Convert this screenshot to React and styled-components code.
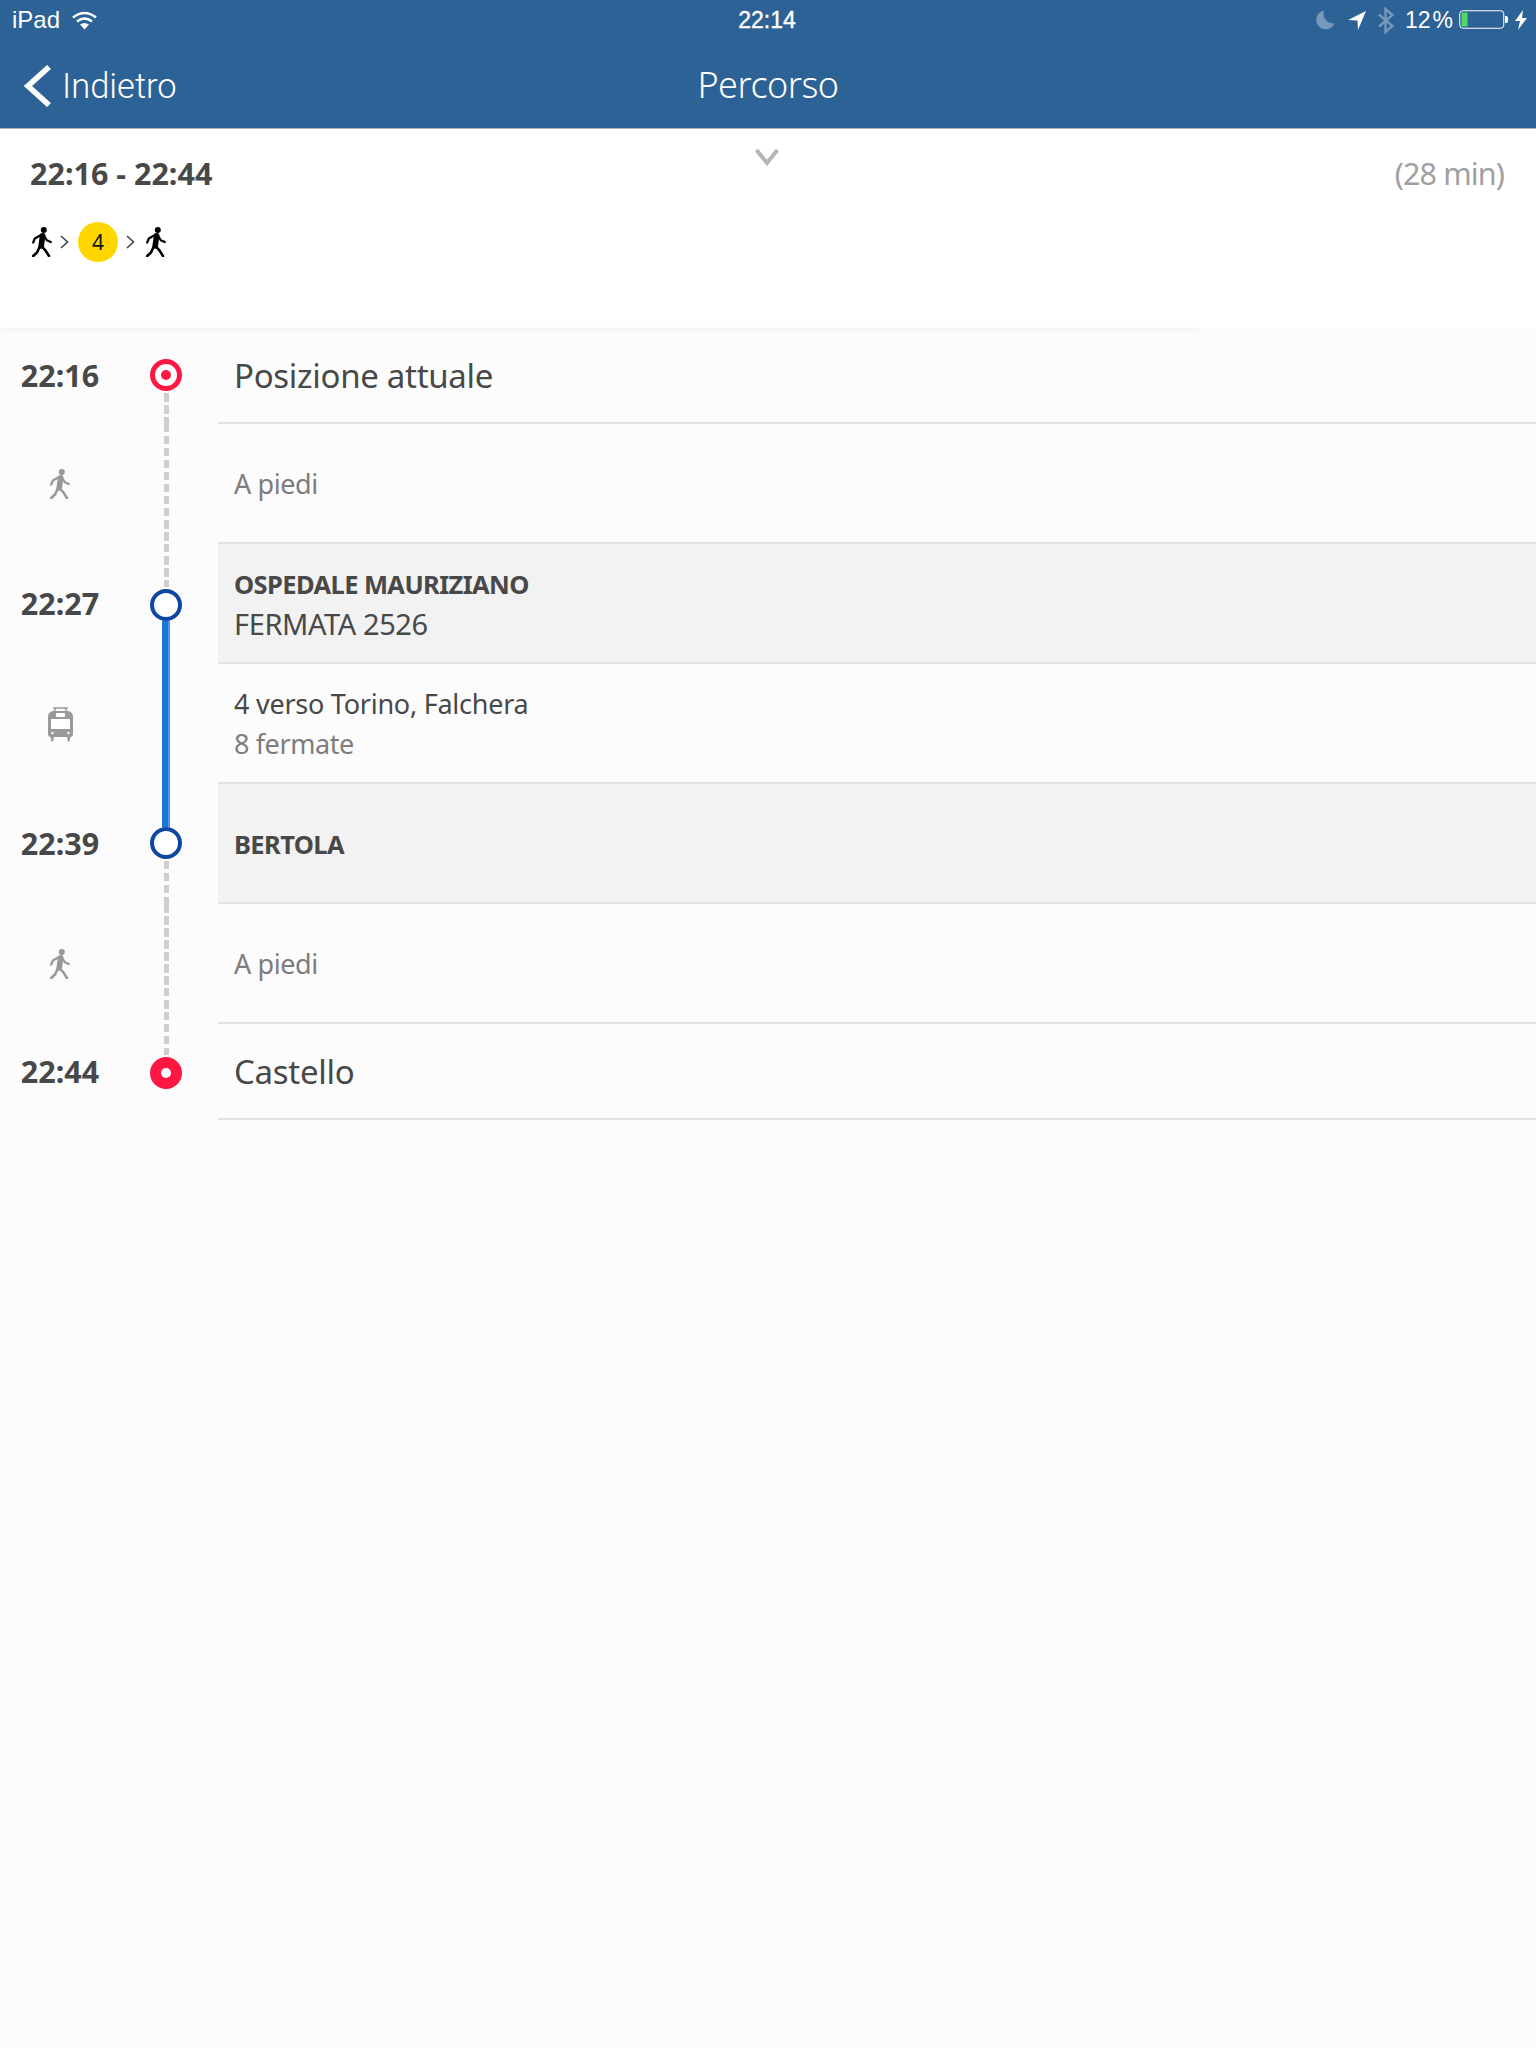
import React from "react";
import styled, { createGlobalStyle } from "styled-components";

const Global = createGlobalStyle`
  html, body { margin: 0; padding: 0; background: #fbfbfb; }
  body { font-family: "Noto Sans", "Liberation Sans", sans-serif; color: #484848; }
  * { box-sizing: border-box; }
`;
const Page = styled.div`width: 1536px; height: 2048px; background: #fbfbfb; overflow: hidden;`;
const Header = styled.header`height: 129px; background: #2d6296; border-bottom: 1px solid #a9b4bf; display: flex; flex-direction: column; color: #fff;`;
const StatusBar = styled.div`height: 40px; display: grid; grid-template-columns: 1fr auto 1fr; align-items: center; padding: 0 9px 0 12px; font: 24px "Liberation Sans", sans-serif;`;
const StatusLeft = styled.div`display: flex; align-items: center; gap: 12px;`;
const StatusClock = styled.div`font-size: 23px; -webkit-text-stroke: 0.4px #fff; margin-right: 5px;`;
const StatusRight = styled.div`display: flex; align-items: center; justify-content: flex-end;`;
const Percent = styled.span`margin: 0 6px 0 11px; font-size: 23px;`;
const NavBar = styled.div`flex: 1; display: grid; grid-template-columns: 1fr auto 1fr; align-items: center; padding: 3px 24px 0;`;
const BackLink = styled.div`display: flex; align-items: center; gap: 11px; font: 300 34.5px Roboto, "Liberation Sans", sans-serif;`;
const Title = styled.div`font-family: "Noto Sans", sans-serif; font-size: 36px; font-weight: 300; letter-spacing: -0.5px; margin-bottom: 3px;`;

const Summary = styled.section`position: relative; height: 199px; background: #fff; padding: 24px 32px 0 30px;
  &::after { content: ""; position: absolute; left: 0; bottom: 0; width: 1200px; height: 2px; box-shadow: 0 2px 5px rgba(0,0,0,.09); }`;
const SummaryTop = styled.div`display: grid; grid-template-columns: 1fr auto 1fr; align-items: start;`;
const Range = styled.div`font-size: 30.5px; font-weight: 700; line-height: 40px; color: #484848;`;
const Toggle = styled.div`height: 18px; display: flex; justify-content: center; margin-top: -5px;`;
const Duration = styled.div`font-size: 30.5px; line-height: 40px; color: #a0a0a0; text-align: right; font-weight: 400; letter-spacing: -0.9px;`;
const Legs = styled.div`display: flex; align-items: center; margin-top: 29px; padding-left: 2px; height: 40px;`;
const Badge = styled.span`width: 40px; height: 40px; border-radius: 50%; background: #ffd600; color: #111; display: flex; align-items: center; justify-content: center; font-size: 21px; margin-left: 9px;`;
const Arrow = styled.svg`margin-left: 8px; display: block;`;
const LegGap = styled.span`width: 11px;`;

const Timeline = styled.main`background: #fcfcfc;`;
const Row = styled.div`display: grid; grid-template-columns: 120px 92px 1fr; height: ${p => p.$h}px;`;
const TimeCell = styled.div`display: flex; align-items: center; justify-content: center; padding-bottom: 2px; font-size: 30.5px; font-weight: 700; color: #484848;`;
const Rail = styled.div`display: flex; flex-direction: column; align-items: center;`;
const Segment = styled.div`flex: 1;
  ${p => p.$kind === "walk" && `width: 5px; background: repeating-linear-gradient(to bottom, #cfcfcf 0 8.5px, transparent 8.5px 12px);`}
  ${p => p.$kind === "line" && `width: 8px; background: linear-gradient(to right, #1976d2 0 6px, #4c97e6 6px 8px);`}
  ${p => p.$kind === "none" && `visibility: hidden;`}
  margin: ${p => (p.$kind === "walk" ? (p.$gap === "top" ? "2px 0 0" : p.$gap === "bottom" ? "0 0 2px" : "0") : "0")};`;
const Node = styled.div`width: 32px; height: 32px; border-radius: 50%; flex: none; display: flex; align-items: center; justify-content: center;
  ${p => p.$type === "start" && `border: 5px solid #ff1744; background: #fff;`}
  ${p => p.$type === "stop" && `border: 4.5px solid #0d47a1; background: #fff;`}
  ${p => p.$type === "end" && `background: #ff1744;`}
`;
const NodeDot = styled.span`width: 10px; height: 10px; border-radius: 50%; background: ${p => p.$c};`;
const Content = styled.div`margin-left: 6px; padding: 2px 0 0 16px; display: flex; flex-direction: column; justify-content: center; border-bottom: 2px solid #e2e2e2; background: ${p => (p.$stop ? "#f2f2f2" : "transparent")};`;
const Place = styled.div`font-size: 33px; line-height: 42px; letter-spacing: -0.3px; color: #484848;`;
const Muted = styled.div`font-size: 27px; line-height: 40px; letter-spacing: -0.4px; color: #7d7d7d;`;
const Line = styled.div`font-size: 27px; line-height: 40px; letter-spacing: -0.25px; color: #484848;`;
const Platform = styled.div`font-size: 29px; line-height: 40px; letter-spacing: -0.4px; color: #484848;`;
const StopName = styled.div`font-size: 25.5px; font-weight: 700; line-height: 40px; letter-spacing: -0.6px; color: #484848;`;
const IconCell = styled.div`display: flex; align-items: center; justify-content: center;`;

const Walker = ({ color }) => (
  <svg width="20" height="30" viewBox="0 0 20 30" fill="none" stroke={color} strokeLinecap="round" strokeLinejoin="round" style={{ display: "block" }}>
    <circle cx="11.8" cy="3" r="3" fill={color} stroke="none" />
    <path d="M10.6 8.8 L9.2 19" strokeWidth="5.6" />
    <path d="M9 8 L2.8 11.5 L1.2 15.5" strokeWidth="2.2" />
    <path d="M12 8.5 L14.8 13.2 L18.8 15" strokeWidth="2.2" />
    <path d="M7.8 19.5 L5 25.5 L1.2 29" strokeWidth="2.6" />
    <path d="M10 19.5 L13.6 23.6 L17 29" strokeWidth="2.6" />
  </svg>
);
const Tram = () => (
  <svg width="25" height="35" viewBox="0 0 25 35" style={{ display: "block" }}>
    <path d="M5 1 H20 M8 1 L6 5 M17 1 L19 5" stroke="#999" strokeWidth="1.3" fill="none" />
    <path d="M5 4 H20 Q25 5 25 10 V27 Q25 30 22 30 H3 Q0 30 0 27 V10 Q0 5 5 4 Z" fill="#999" />
    <rect x="8" y="6" width="9" height="4" rx="1" fill="#fff" />
    <rect x="3" y="12" width="19" height="10" fill="#fff" />
    <circle cx="4.5" cy="26" r="1.2" fill="#fff" />
    <circle cx="20.5" cy="26" r="1.2" fill="#fff" />
    <path d="M2.5 30 H6 L5 34.5 H3.5 Z M19 30 H22.5 L21.5 34.5 H20 Z" fill="#999" />
  </svg>
);
const LegArrow = () => (
  <Arrow width="9" height="14" viewBox="0 0 9 14"><path d="M1 1 L7.5 7 L1 13" fill="none" stroke="#444" strokeWidth="1.6" /></Arrow>
);

const Wifi = () => (
  <svg width="25" height="19" viewBox="0 0 25 19" fill="none" stroke="#fff" strokeWidth="2.6">
    <path d="M1 6.5 Q12.5 -2.5 24 6.5" /><path d="M5 10.5 Q12.5 4.5 20 10.5" /><path d="M12.5 18.5 L8 13.5 Q12.5 10.5 17 13.5 Z" fill="#fff" stroke="none" />
  </svg>
);
const Moon = () => (
  <svg width="19" height="20" viewBox="0 0 19 20" style={{ marginRight: 13 }}><path d="M8 0.5 A9.5 9.5 0 1 0 18.5 13.5 A10 10 0 0 1 8 0.5 Z" fill="#fff" opacity=".35" /></svg>
);
const Locate = () => (
  <svg width="18" height="19" viewBox="0 0 18 19" style={{ marginRight: 12 }}><path d="M0 9 L18 0 L10 19 L9.5 9.5 Z" fill="#fff" /></svg>
);
const Bluetooth = () => (
  <svg width="16" height="27" viewBox="0 0 16 27" fill="none" stroke="#fff" strokeOpacity=".35" strokeWidth="2.4"><path d="M1 7.5 L14.5 19 L7.5 25 V2 L14.5 8 L1 19.5" /></svg>
);
const Battery = () => (
  <svg width="50" height="20" viewBox="0 0 50 20" style={{ marginRight: 6 }}>
    <rect x=".75" y=".75" width="44" height="17.5" rx="3" fill="none" stroke="#fff" strokeWidth="1" />
    <rect x="2.5" y="2.5" width="6" height="14" fill="#4cd964" />
    <path d="M46 6 H47.5 Q49 6 49 8 V11 Q49 13 47.5 13 H46 Z" fill="#fff" />
  </svg>
);
const Bolt = () => (
  <svg width="12" height="20" viewBox="0 0 12 20"><path d="M8 0 L0 11 H5 L3 20 L12 8 H7 Z" fill="#fff" /></svg>
);

const Stage = ({ kind, gap }) => <Segment $kind={kind} $gap={gap} />;

export default function App() {
  return (
    <Page>
      <Global />
      <Header>
        <StatusBar>
          <StatusLeft>iPad <Wifi /></StatusLeft>
          <StatusClock>22:14</StatusClock>
          <StatusRight><Moon /><Locate /><Bluetooth /><Percent>12{"\u200A"}%</Percent><Battery /><Bolt /></StatusRight>
        </StatusBar>
        <NavBar>
          <BackLink>
            <svg width="27" height="42" viewBox="0 0 27 42" fill="none" stroke="#fff" strokeWidth="5.6"><path d="M25 2 L4 21 L25 40" /></svg>
            Indietro
          </BackLink>
          <Title>Percorso</Title>
          <div />
        </NavBar>
      </Header>
      <Summary>
        <SummaryTop>
          <Range>22:16 - 22:44</Range>
          <Toggle>
            <svg width="24" height="18" viewBox="0 0 24 18" fill="none" stroke="#b5b5b5" strokeWidth="4"><path d="M1.5 2 L12 15 L22.5 2" /></svg>
          </Toggle>
          <Duration>(28 min)</Duration>
        </SummaryTop>
        <Legs>
          <Walker color="#000" />
          <LegArrow />
          <Badge>4</Badge>
          <LegArrow />
          <LegGap />
          <Walker color="#000" />
        </Legs>
      </Summary>
      <Timeline>
        <Row $h={96}>
          <TimeCell>22:16</TimeCell>
          <Rail><Stage kind="none" /><Node $type="start"><NodeDot $c="#ff1744" /></Node><Stage kind="walk" gap="top" /></Rail>
          <Content><Place>Posizione attuale</Place></Content>
        </Row>
        <Row $h={120}>
          <IconCell><Walker color="#999" /></IconCell>
          <Rail><Stage kind="walk" /></Rail>
          <Content><Muted>A piedi</Muted></Content>
        </Row>
        <Row $h={120}>
          <TimeCell>22:27</TimeCell>
          <Rail><Stage kind="walk" gap="bottom" /><Node $type="stop" /><Stage kind="line" /></Rail>
          <Content $stop><StopName>OSPEDALE MAURIZIANO</StopName><Platform>FERMATA 2526</Platform></Content>
        </Row>
        <Row $h={120}>
          <IconCell><Tram /></IconCell>
          <Rail><Stage kind="line" /></Rail>
          <Content><Line>4 verso Torino, Falchera</Line><Muted>8 fermate</Muted></Content>
        </Row>
        <Row $h={120}>
          <TimeCell>22:39</TimeCell>
          <Rail><Stage kind="line" /><Node $type="stop" /><Stage kind="walk" gap="top" /></Rail>
          <Content $stop><StopName>BERTOLA</StopName></Content>
        </Row>
        <Row $h={120}>
          <IconCell><Walker color="#999" /></IconCell>
          <Rail><Stage kind="walk" /></Rail>
          <Content><Muted>A piedi</Muted></Content>
        </Row>
        <Row $h={96}>
          <TimeCell>22:44</TimeCell>
          <Rail><Stage kind="walk" gap="bottom" /><Node $type="end"><NodeDot $c="#fff" /></Node><Stage kind="none" /></Rail>
          <Content><Place>Castello</Place></Content>
        </Row>
      </Timeline>
    </Page>
  );
}
